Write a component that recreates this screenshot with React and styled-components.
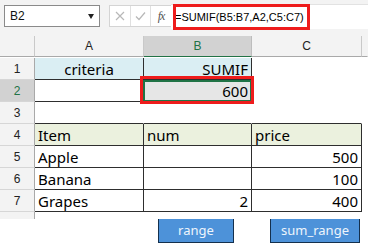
import React from "react";
import styled, { createGlobalStyle } from "styled-components";

const Global = createGlobalStyle`
  html, body { margin: 0; padding: 0; background: #ffffff; }
  body { font-family: "Noto Sans", "DejaVu Sans", sans-serif; }
`;

const Page = styled.div`
  width: 389px;
  height: 250px;
  background: #ffffff;
  overflow: hidden;
`;

const Window = styled.div`
  width: 368px;
  background: #f3f3f3;
  position: relative;
`;

const Toolbar = styled.div`
  height: 36px;
  display: flex;
  align-items: flex-start;
  padding: 4px 0 0 4px;
  box-sizing: border-box;
`;

const NameBox = styled.div`
  width: 96px;
  height: 22px;
  margin-top: 1px;
  box-sizing: border-box;
  border: 1px solid #8a8a8a;
  background: #fff;
  display: flex;
  align-items: center;
  justify-content: space-between;
  padding: 0 4px 0 5px;
  font-family: "Liberation Sans", Arial, sans-serif;
  font-size: 12px;
  color: #111;
`;

const Arrow = styled.span`
  width: 0;
  height: 0;
  border-left: 3px solid transparent;
  border-right: 3px solid transparent;
  border-top: 5px solid #222;
  margin-right: 1px;
`;

const IconGroup = styled.div`
  margin-left: 9px;
  margin-top: 1px;
  height: 22px;
  display: flex;
  box-sizing: border-box;
  border: 1px solid #d4d4d4;
  border-right: none;
  background: #fff;
`;

const IconCell = styled.div`
  width: ${(p) => p.$w}px;
  height: 20px;
  display: flex;
  align-items: center;
  justify-content: center;
  border-right: ${(p) => (p.$sep ? "1px solid #e0e0e0" : "none")};
`;

const Fx = styled.span`
  font-family: "Liberation Serif", "Times New Roman", serif;
  font-style: italic;
  font-size: 12px;
  color: #555;
  letter-spacing: -1px;
`;

const FormulaInput = styled.div`
  flex: 1;
  height: 25px;
  box-sizing: border-box;
  background: #fff;
  border-top: 1px solid #e2e2e2;
  display: flex;
  align-items: center;
  padding-left: 4px;
  font-family: "Liberation Sans", Arial, sans-serif;
  font-size: 11px;
  color: #000;
  position: relative;
`;

const Highlight = styled.div`
  position: absolute;
  border: 3px solid #ee1c1c;
  box-sizing: border-box;
  pointer-events: none;
`;

const FormulaHighlight = styled(Highlight)`
  left: 2px;
  top: -1px;
  width: 137px;
  height: 26px;
`;

const Sheet = styled.div`
  display: grid;
  grid-template-columns: 35px 109px 108px 110px 6px;
  grid-auto-rows: 22px;
  position: relative;
  height: 183px;
  overflow: hidden;
  background: #fff;
`;

const ColHead = styled.div`
  height: 21px;
  box-sizing: border-box;
  background: ${(p) => (p.$sel ? "#d2d2d2" : "#f3f3f3")};
  border-bottom: 1px solid ${(p) => (p.$sel ? "#217346" : "#a9a9a9")};
  border-right: 1px solid ${(p) => (p.$sel ? "#bdbdbd" : p.$noline ? "transparent" : "#c9c9c9")};
  color: ${(p) => (p.$sel ? "#217346" : "#222")};
  display: flex;
  align-items: center;
  justify-content: center;
  font-family: "Liberation Sans", Arial, sans-serif;
  font-size: 12px;
`;

const RowHead = styled.div`
  box-sizing: border-box;
  background: ${(p) => (p.$sel ? "#d2d2d2" : "#f3f3f3")};
  border-right: 1px solid #a9a9a9;
  border-bottom: 1px solid #d6d6d6;
  color: ${(p) => (p.$sel ? "#217346" : "#222")};
  display: flex;
  align-items: ${(p) => (p.$cut ? "flex-start" : "center")};
  justify-content: center;
  padding-top: ${(p) => (p.$cut ? "6px" : "0")};
  font-family: "Liberation Sans", Arial, sans-serif;
  font-size: 12px;
`;

const Cell = styled.div`
  box-sizing: border-box;
  background: ${(p) => p.$bg || "#fff"};
  border-right: 1px solid ${(p) => (p.$r ? "#2e2e2e" : "transparent")};
  border-bottom: 1px solid ${(p) => (p.$b ? "#2e2e2e" : "transparent")};
  display: flex;
  align-items: center;
  justify-content: ${(p) => p.$align || "flex-start"};
  padding: 0 3px 0 3px;
  font-size: 15px;
  color: #000;
  white-space: nowrap;
  position: relative;
`;

const Selected = styled.div`
  position: absolute;
  inset: 0 -1px -1px -1px;
  border: 2px solid #217346;
  pointer-events: none;
`;

const CellHighlight = styled(Highlight)`
  left: 140px;
  top: 40px;
  width: 114px;
  height: 28px;
  z-index: 3;
`;

const Filler = styled.div`
  background: ${(p) => p.$bg || "#fff"};
`;

const ButtonRow = styled.div`
  display: flex;
  gap: 36px;
  padding-left: 158px;
  margin-top: -1px;
`;

const ShapeButton = styled.div`
  width: ${(p) => p.$w}px;
  height: 25px;
  box-sizing: border-box;
  background: #4d92d9;
  border: 1px solid #14304d;
  color: #eef5fc;
  display: flex;
  align-items: center;
  justify-content: center;
  font-size: 13px;
  padding-bottom: 1px;
`;

const rows = [
  { n: 1, cells: [
    { t: "criteria", bg: "#daeef3", align: "center", r: true, b: true },
    { t: "SUMIF", bg: "#daeef3", align: "flex-end", r: true, b: true },
    { t: "" },
  ] },
  { n: 2, sel: true, cells: [
    { t: "", r: true, b: true },
    { t: "600", bg: "#e6e6e6", align: "flex-end", r: true, b: true, selected: true },
    { t: "" },
  ] },
  { n: 3, cells: [
    { t: "", b: true },
    { t: "", b: true },
    { t: "", b: true },
  ] },
  { n: 4, cells: [
    { t: "Item", bg: "#ebf1de", r: true, b: true },
    { t: "num", bg: "#ebf1de", r: true, b: true },
    { t: "price", bg: "#ebf1de", r: true, b: true },
  ] },
  { n: 5, cells: [
    { t: "Apple", r: true, b: true },
    { t: "", r: true, b: true },
    { t: "500", align: "flex-end", r: true, b: true },
  ] },
  { n: 6, cells: [
    { t: "Banana", r: true, b: true },
    { t: "", r: true, b: true },
    { t: "100", align: "flex-end", r: true, b: true },
  ] },
  { n: 7, cells: [
    { t: "Grapes", r: true, b: true },
    { t: "2", align: "flex-end", r: true, b: true },
    { t: "400", align: "flex-end", r: true, b: true },
  ] },
];

export default function App() {
  return (
    <Page>
      <Global />
      <Window>
        <Toolbar>
          <NameBox>
            B2
            <Arrow />
          </NameBox>
          <IconGroup>
            <IconCell $w={20} $sep>
              <svg width="10" height="10" viewBox="0 0 10 10">
                <path d="M1 1 L9 9 M9 1 L1 9" stroke="#b8b8b8" strokeWidth="1.2" fill="none" />
              </svg>
            </IconCell>
            <IconCell $w={19} $sep>
              <svg width="11" height="10" viewBox="0 0 11 10">
                <path d="M1 5.5 L4 8.5 L10 1.5" stroke="#b8b8b8" strokeWidth="1.2" fill="none" />
              </svg>
            </IconCell>
            <IconCell $w={20}>
              <Fx>fx</Fx>
            </IconCell>
          </IconGroup>
          <FormulaInput>
            =SUMIF(B5:B7,A2,C5:C7)
            <FormulaHighlight />
          </FormulaInput>
        </Toolbar>
        <Sheet>
          <ColHead />
          <ColHead>A</ColHead>
          <ColHead $sel>B</ColHead>
          <ColHead>C</ColHead>
          <ColHead $noline />
          {rows.map((row) => (
            <React.Fragment key={row.n}>
              <RowHead $sel={row.sel}>{row.n}</RowHead>
              {row.cells.map((c, i) => (
                <Cell key={i} $bg={c.bg} $align={c.align} $r={c.r} $b={c.b}>
                  {c.t}
                  {c.selected && <Selected />}
                </Cell>
              ))}
              <Filler $bg="#fff" />
            </React.Fragment>
          ))}
          <RowHead $cut>8</RowHead>
          <Filler />
          <Filler />
          <Filler />
          <Filler />
          <CellHighlight />
        </Sheet>
      </Window>
      <ButtonRow>
        <ShapeButton $w={76}>range</ShapeButton>
        <ShapeButton $w={90}>sum_range</ShapeButton>
      </ButtonRow>
    </Page>
  );
}
